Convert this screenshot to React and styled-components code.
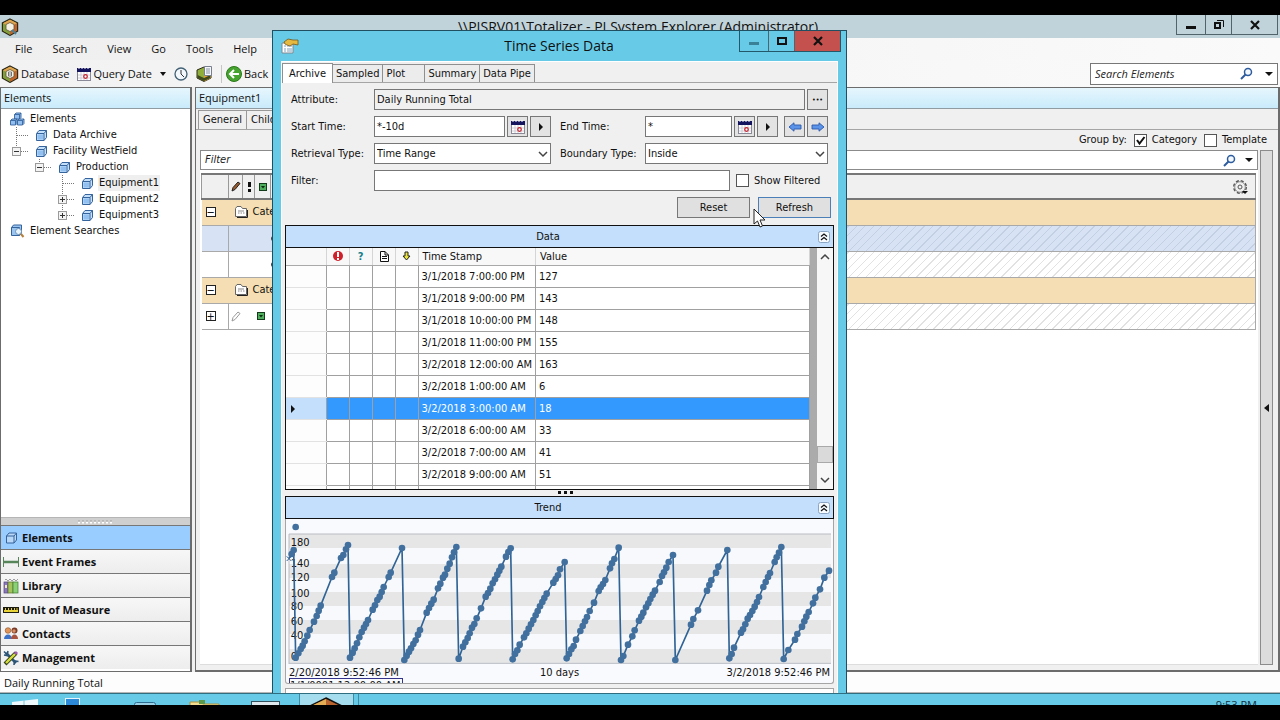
import React from "react";
import styled, { createGlobalStyle } from "styled-components";

const GlobalStyle = createGlobalStyle`
  * {
    box-sizing: border-box;
  }
  body {
    margin: 0;
    background-color: #000000;
    color: #111111;
    font-family: "DejaVu Sans Condensed", "DejaVu Sans", sans-serif;
    font-size: 11px;
    line-height: 16px;
  }
  button, input, select {
    margin: 0;
    padding: 0;
    border-radius: 0;
    color: inherit;
    font: inherit;
  }
  svg {
    display: block;
    flex: none;
  }
`;

const TREE = [
  { label: "Elements", depth: 0, icon: "group" },
  { label: "Data Archive", depth: 1 },
  { label: "Facility WestField", depth: 1, toggle: "-", last: true },
  { label: "Production", depth: 2, toggle: "-", last: true },
  { label: "Equipment1", depth: 3, selected: true },
  { label: "Equipment2", depth: 3, toggle: "+" },
  { label: "Equipment3", depth: 3, toggle: "+", last: true },
  { label: "Element Searches", depth: 0, icon: "search" },
];

const ROWS = [
  ["3/1/2018 7:00:00 PM", 127],
  ["3/1/2018 9:00:00 PM", 143],
  ["3/1/2018 10:00:00 PM", 148],
  ["3/1/2018 11:00:00 PM", 155],
  ["3/2/2018 12:00:00 AM", 163],
  ["3/2/2018 1:00:00 AM", 6],
  ["3/2/2018 3:00:00 AM", 18],
  ["3/2/2018 6:00:00 AM", 33],
  ["3/2/2018 7:00:00 AM", 41],
  ["3/2/2018 9:00:00 AM", 51],
];

// trend samples, in chart units
const FIRST_DAYS = [
  [27, 235], [35, 222], [41, 210],
  [47, 533], [55, 520], [62, 507], [68, 497], [74, 484], [82, 467], [89, 450], [102, 425], [110, 408], [116, 392], [122, 377], [156, 291], [163, 278], [183, 234], [190, 225], [198, 208], [204, 195],
  [210, 533], [218, 518], [224, 505], [231, 490], [238, 472], [245, 456], [252, 443], [258, 432], [264, 420], [278, 389], [285, 376], [292, 360], [299, 350], [305, 336], [311, 321], [326, 291], [332, 278], [366, 204],
  [373, 540], [380, 527], [387, 515], [393, 505], [400, 492], [407, 481], [414, 464], [420, 450], [440, 398], [447, 384], [454, 371], [461, 359], [474, 325], [481, 311], [489, 293], [495, 284], [502, 266], [509, 251], [516, 232], [522, 217], [529, 201],
  [536, 536], [549, 500], [556, 487], [563, 474], [569, 460], [576, 443], [583, 432], [590, 415], [603, 385], [617, 350], [624, 339], [631, 326], [638, 310], [645, 298], [652, 284], [658, 272], [664, 260], [678, 230], [685, 216], [692, 205],
  [698, 538], [705, 522], [712, 511], [719, 494], [732, 472], [739, 460], [746, 446], [753, 433], [760, 420], [767, 406], [773, 393], [780, 379], [787, 366], [793, 354], [800, 341], [820, 308], [827, 297], [834, 286], [840, 268], [854, 246],
];
const LAST_DAYS = [
  [20, 775], [27, 762], [34, 748], [41, 738], [48, 719], [61, 693], [68, 678], [75, 664], [81, 651], [89, 633], [102, 608], [116, 573], [122, 562], [129, 552], [136, 540], [150, 505], [156, 490], [163, 477], [176, 443],
  [183, 780], [190, 768], [204, 734], [217, 709], [224, 691], [237, 662], [244, 650], [250, 638], [258, 622], [265, 610], [271, 597], [278, 584], [285, 572], [299, 546], [306, 528], [312, 517], [319, 503], [326, 486], [339, 465],
  [346, 780], [393, 674], [400, 657], [414, 631], [441, 572], [448, 555], [454, 541], [468, 518], [475, 500], [502, 450],
  [508, 775], [515, 762], [522, 743], [543, 698], [549, 688], [556, 673], [563, 656], [570, 645], [577, 633], [584, 620], [591, 606], [597, 591], [610, 561], [617, 546], [624, 531], [630, 519], [644, 486], [650, 472], [657, 458], [664, 441],
  [671, 777], [685, 750], [705, 719], [712, 702], [726, 680], [733, 664], [739, 650], [746, 636], [759, 610], [766, 593], [780, 568], [793, 533], [807, 512],
];
const SAMPLES = [...FIRST_DAYS, ...LAST_DAYS.map(([x, y]) => [x + 840, y - 240])];
const AXIS = [[180, 197], [140, 262], [120, 303], [100, 350], [80, 391], [60, 434], [40, 478], [0, 541]];

function Logo({ search }) {
  return (
    <svg width="18" height="18" viewBox="0 0 18 18">
      <path d="M9 1 16.500 5v8L9 17.300 1.500 13V5z" fill="#d9a441" stroke="#2e2a18" strokeWidth="1.400" />
      <path d="M9 1.700 16 5.300 9 9 2 5.300z" fill="#dfa550" />
      <path d="M16 5.300v7.500l-7 4V9z" fill="#c2642c" />
      <path d="M2 5.300 9 9v7.800l-7-4z" fill="#7fa03c" />
      <path d="M9 4.500 13 6.500v5L9 13.500l-4-2v-5z" fill="#f5f1e4" stroke="#5f5636" strokeWidth=".8" />
      {search
        ? <path d="m11 12 4 4" stroke="#4f7f95" strokeWidth="2" />
        : <path d="M7.500 7h3v4h-3zM7.500 9h3" fill="#fff" stroke="#555" strokeWidth=".8" />}
    </svg>
  );
}

function Calendar() {
  return (
    <svg width="14" height="14" viewBox="0 0 14 14">
      <rect x=".5" y="1.500" width="13" height="12" fill="#fff" stroke="#8a8a98" />
      <path d="M0 1h14v4H0z" fill="#14145f" />
      <path d="M2 0v2M5 0v2M8 0v2M11 0v2" stroke="#fff" />
      <path d="M1 8h12M1 11h12M4 5v8M7 5v8M10 5v8" stroke="#c3c3cf" strokeWidth=".8" />
      <circle cx="8.500" cy="9.500" r="1.800" fill="none" stroke="#c8202a" strokeWidth="1.200" />
    </svg>
  );
}

function Cube() {
  return (
    <svg width="13" height="13" viewBox="0 0 13 13">
      <path d="M1.500 4.500 4 1.500h7.500v7L9 11.500H1.500z" fill="#c4e0fa" stroke="#35639c" strokeLinejoin="round" />
      <path d="M2 4.500h7v7M9 4.500l2.500-3" fill="none" stroke="#35639c" />
      <path d="M2.500 5.500H8v5H2.500z" fill="#92c0f0" />
    </svg>
  );
}

function CubeGroup() {
  return (
    <svg width="15" height="14" viewBox="0 0 15 14">
      <g fill="#92bff0" stroke="#35639c" strokeWidth=".9" strokeLinejoin="round">
        <path d="M4.500 2.500 6 1h5v4.500L9.500 7h-5z" />
        <path d="M.5 8.500 2 7h5v4.500L5.500 13h-5zM7.500 8.500 9 7h5v4.500L12.500 13h-5z" />
        <path d="M4.500 2.500h5V7M9.500 2.500 11 1M.5 8.500h5V13M5.500 8.500 7 7M7.500 8.500h5V13M12.500 8.500 14 7" fill="none" />
      </g>
    </svg>
  );
}

function CubeSearch() {
  return (
    <svg width="15" height="14" viewBox="0 0 15 14">
      <path d="M1.500 3.500 3.500 1h8v8l-2 2.500h-8z" fill="#9cc6f2" stroke="#35639c" />
      <path d="M1.500 3.500h8v8" fill="none" stroke="#35639c" />
      <circle cx="8.500" cy="7.500" r="3" fill="#e8f5ff" stroke="#6f93b5" />
      <path d="m11 10 2.500 3" stroke="#b5803a" strokeWidth="2" />
    </svg>
  );
}

function TreeToggle({ sign, last }) {
  return (
    <svg width="23" height="16" viewBox="0 0 23 16">
      <path d={last ? "M4.500 0v8" : "M4.500 0v16"} stroke="#777" strokeDasharray="1 1" />
      <path d="M5 8.500h12" stroke="#777" strokeDasharray="1 1" />
      {sign && <rect x=".5" y="4.500" width="8" height="8" fill="#f4f4f4" stroke="#9b9b9b" />}
      {sign && <path d={sign === "+" ? "M2 8.500h5M4.500 6v5" : "M2 8.500h5"} stroke="#333" />}
    </svg>
  );
}

function Magnifier() {
  return (
    <svg width="13" height="13" viewBox="0 0 13 13">
      <circle cx="8" cy="5" r="3.500" fill="#f4f9ff" stroke="#2d5c9e" strokeWidth="1.500" />
      <path d="M5.500 7.500 1 12" stroke="#2d5c9e" strokeWidth="2" />
    </svg>
  );
}

function Caret({ side }) {
  return (
    <svg width="8" height="8" viewBox="0 0 8 8">
      <path d={side ? "M2 0v8l4-4z" : "M0 2h8L4 6z"} fill="#111" />
    </svg>
  );
}

function SmallCaret() {
  return <svg width="6" height="4"><path d="M0 0h6L3 4z" fill="#111" /></svg>;
}

function Chevron({ up }) {
  return (
    <svg width="10" height="10" viewBox="0 0 10 10">
      <path d={up ? "m1 7 4-4 4 4" : "m1 3 4 4 4-4"} fill="none" stroke="#444" strokeWidth="1.500" />
    </svg>
  );
}

function BlueArrow({ left }) {
  return (
    <svg width="14" height="10" viewBox="0 0 14 10">
      <path
        d={left ? "M1 5 6 .8V3h7v4H6v2.200z" : "M13 5 8 .8V3H1v4h7v2.200z"}
        fill="#5b93e8"
        stroke="#2c59ab"
        strokeWidth=".9"
      />
    </svg>
  );
}

function Minimize({ color = "#111" }) {
  return <svg width="12" height="10"><path d="M1 6h10v3H1z" fill={color} /></svg>;
}

function Maximize() {
  return <svg width="12" height="10"><rect x="2" y="2" width="8" height="6" fill="none" stroke="#111" strokeWidth="2" /></svg>;
}

function Restore() {
  return (
    <svg width="12" height="11" viewBox="0 0 12 11">
      <path d="M2 4h5v5H2z" fill="none" stroke="#111" strokeWidth="2" />
      <path d="M4 1.500h6.500V8" fill="none" stroke="#111" />
    </svg>
  );
}

function Close() {
  return <svg width="10" height="10" viewBox="0 0 10 10"><path d="m1 1 8 8M9 1 1 9" stroke="#111" strokeWidth="2.200" /></svg>;
}

function DoubleUp() {
  return (
    <svg width="12" height="12" viewBox="0 0 12 12">
      <rect x=".5" y=".5" width="11" height="11" rx="2" fill="#f5faff" stroke="#8ba5c4" />
      <path d="m3 5.500 3-2.500 3 2.500M3 9l3-2.500L9 9" fill="none" stroke="#111" strokeWidth="1.200" />
    </svg>
  );
}

function GreenFlag() {
  return (
    <svg width="8" height="8" viewBox="0 0 8 8">
      <rect x=".5" y=".5" width="7" height="7" fill="#4fae5d" stroke="#123c19" />
      <path d="M2 3h4L4 5.500z" fill="#0b2a10" />
    </svg>
  );
}

function Pencil({ faint }) {
  return (
    <svg width="10" height="11" viewBox="0 0 10 11">
      <path d="M1 10 2 6.500 7 1l2 1.500-5 6z" fill={faint ? "#fff" : "#9b5a2c"} stroke={faint ? "#999" : "#222"} />
    </svg>
  );
}

function Folder() {
  return (
    <svg width="14" height="13" viewBox="0 0 14 13">
      <path d="M2 11.500h10.500V4" fill="none" stroke="#222" />
      <path d="M.5 2.500 2 .5h4L7.500 2.500h4v8H.5z" fill="#fff" stroke="#666" />
      <path d="M3 5h6M3 7h1.500M5.500 7H7M8 7h1.500" stroke="#888" />
    </svg>
  );
}

function Gear() {
  return (
    <svg width="16" height="16" viewBox="0 0 16 16">
      <circle cx="8" cy="8" r="6.300" fill="none" stroke="#555" strokeWidth="1.400" strokeDasharray="3 1.950" />
      <circle cx="8" cy="8" r="5.300" fill="#f0f0f0" stroke="#777" strokeWidth=".8" />
      <circle cx="8" cy="8" r="2" fill="none" stroke="#555" />
      <path d="M10 12h6l-3 3z" fill="#111" />
    </svg>
  );
}

function NavIcon({ name }) {
  return (
    <svg width="16" height="16" viewBox="0 0 16 16">
      {name === "Elements" && (
        <g fill="none" stroke="#35639c">
          <path d="M3.500 6 6 3h7.500v7L11 13H3.500z" fill="#b9d8f7" />
          <path d="M3.500 6H11v7M11 6l2.500-3" />
        </g>
      )}
      {name === "Event Frames" && (
        <g stroke="#56855a">
          <path d="M.5 3v10M15.500 3v10" />
          <path d="M1 8h14" strokeWidth="2.500" />
        </g>
      )}
      {name === "Library" && (
        <g strokeWidth=".7">
          <rect x="1" y="4" width="4" height="11" fill="#8a79bd" stroke="#54467f" />
          <rect x="5" y="4" width="5" height="11" fill="#a5c25c" stroke="#58702a" />
          <rect x="10" y="4" width="5" height="11" fill="#8bcf76" stroke="#3f7a31" />
          <path d="M2 2l1-1 2 2 2-2 2 2 2-2 2 2 2-2" fill="none" stroke="#777" />
          <path d="M2 7h2v3H2z" fill="#f0e8c0" />
        </g>
      )}
      {name === "Unit of Measure" && (
        <g>
          <path d="M0 5h16v6H0z" fill="#1c1c10" />
          <path d="M1 8h14v2H1z" fill="#e8d23a" />
          <path d="M2.500 6v3M5.500 6v3M8.500 6v3M11.500 6v3M14 6v3" stroke="#e8d23a" />
        </g>
      )}
      {name === "Contacts" && (
        <g>
          <circle cx="5" cy="4.500" r="2.800" fill="#e0955a" stroke="#8c4c24" strokeWidth=".6" />
          <path d="M1 13c0-6 8-6 8 0z" fill="#3d72c9" />
          <circle cx="11.500" cy="4.500" r="3" fill="#7b3a26" />
          <circle cx="11" cy="5" r="1.700" fill="#d99068" />
          <path d="M8 13c0-6 7-6 7 0z" fill="#a85240" />
        </g>
      )}
      {name === "Management" && (
        <g>
          <path d="m3 3 10 10" stroke="#2d5577" strokeWidth="2.600" />
          <path d="M1 1.500 4 4.500M1 5l3 .5L5 1M11 15l.5-4 4 .5" stroke="#2d5577" strokeWidth="1.600" fill="none" />
          <path d="M2 14 13 3" stroke="#33401a" strokeWidth="4" />
          <path d="M3 13 12 4" stroke="#d6de3c" strokeWidth="2.400" />
          <path d="m12 4 2-2" stroke="#a05ab0" strokeWidth="3" />
        </g>
      )}
    </svg>
  );
}

function TrendPlot() {
  return (
    <Plot viewBox="18 117 1641 438" preserveAspectRatio="none">
      <rect x="27" y="162" width="1626" height="387" fill="#f8f9fc" />
      {[162, 252, 336, 420, 507].map((y) => (
        <rect key={y} x="27" y={y} width="1626" height="42" fill="#e6e6e7" />
      ))}
      <path d="M27 552V162H1653M27 550H1653" fill="none" stroke="#b9bcc3" strokeWidth="3" />
      {AXIS.map(([label, y]) => (
        <text key={label} x="32" y={y} fontSize="33" fill="#111">{label}</text>
      ))}
      <polyline
        points={SAMPLES.map((p) => p.join(",")).join(" ")}
        fill="none"
        stroke="#316496"
        strokeWidth="5"
      />
      {SAMPLES.slice(1).map(([x, y]) => (
        <circle key={x} cx={x} cy={y} r="10" fill="#41709f" />
      ))}
      <path d="m20 229 14 14m0-14-14 14" stroke="#316496" strokeWidth="3" />
      <circle cx="47" cy="141" r="10" fill="#41709f" />
    </Plot>
  );
}

function DataTable() {
  return (
    <DataGrid>
      <colgroup>
        <col width="40" />
        <col width="23" />
        <col width="23" />
        <col width="23" />
        <col width="23" />
        <col width="117" />
        <col />
      </colgroup>
      <thead>
        <tr>
          <th aria-label="Row" />
          <th aria-label="Error">
            <svg width="10" height="10"><circle cx="5" cy="5" r="5" fill="#cf1f2b" /><path d="M4 1h2v5H4zM4 7h2v2H4z" fill="#fff" /></svg>
          </th>
          <th><Question>?</Question></th>
          <th aria-label="Annotation">
            <svg width="10" height="11"><path d="M1.500.5H6L9.500 4v6.500h-8zM3 5.500h5M3 7.500h5M6 .5V4h3.500" fill="#fff" stroke="#111" /></svg>
          </th>
          <th aria-label="Substituted">
            <svg width="9" height="10"><path d="M3 1h3v4h2L4.500 9 1 5h2z" fill="#e9e337" stroke="#222" /></svg>
          </th>
          <th>Time Stamp</th>
          <th>Value</th>
        </tr>
      </thead>
      <tbody>
        {ROWS.map(([time, value], i) => (
          <DataRow key={time} $selected={i === 6}>
            <td>{i === 6 && <Caret side />}</td>
            <td />
            <td />
            <td />
            <td />
            <td>{time}</td>
            <td>{value}</td>
          </DataRow>
        ))}
        <DataRow>
          <td /><td /><td /><td /><td /><td /><td />
        </DataRow>
      </tbody>
    </DataGrid>
  );
}

function TimeSeriesDialog() {
  return (
    <Dialog>
      <DialogTitle>
        <svg width="18" height="16" viewBox="0 0 18 16">
          <path d="M1 5h11v10H1z" fill="#fff" stroke="#7c8792" />
          <path d="M3 8h2M6 8h5M3 11h2M6 11h5M3 13h2M6 13h5" stroke="#7f9fbd" />
          <path d="m3 4 4-3 5 1h5v5l-5-1-3 2-3-1-2-1z" fill="#e5b93f" stroke="#75581c" strokeWidth=".8" />
        </svg>
        <DialogName>Time Series Data</DialogName>
        <WindowButtons $dialog>
          <WindowButton $w={28} aria-label="Minimize"><Minimize color="#3a8197" /></WindowButton>
          <WindowButton $w={26} aria-label="Maximize"><Maximize /></WindowButton>
          <WindowButton $w={46} $close aria-label="Close"><Close /></WindowButton>
        </WindowButtons>
      </DialogTitle>
      <Client>
        <DialogTabs>
          <DialogTab $active>Archive</DialogTab>
          <DialogTab>Sampled</DialogTab>
          <DialogTab $w={42}>Plot</DialogTab>
          <DialogTab>Summary</DialogTab>
          <DialogTab>Data Pipe</DialogTab>
        </DialogTabs>
        <Form>
          <label htmlFor="attribute">Attribute:</label>
          <FieldLine>
            <TextField id="attribute" $muted readOnly value="Daily Running Total" />
            <SmallButton>•••</SmallButton>
          </FieldLine>
          <label htmlFor="start">Start Time:</label>
          <FieldPair>
            <FieldLine>
              <TextField id="start" defaultValue="*-10d" />
              <SmallButton aria-label="Pick start"><Calendar /></SmallButton>
              <SmallButton aria-label="Start options"><Caret side /></SmallButton>
            </FieldLine>
            <label htmlFor="end">End Time:</label>
            <FieldLine>
              <TextField id="end" defaultValue="*" />
              <SmallButton aria-label="Pick end"><Calendar /></SmallButton>
              <SmallButton aria-label="End options"><Caret side /></SmallButton>
              <Steps>
                <SmallButton aria-label="Back"><BlueArrow left /></SmallButton>
                <SmallButton aria-label="Forward"><BlueArrow /></SmallButton>
              </Steps>
            </FieldLine>
          </FieldPair>
          <label htmlFor="retrieval">Retrieval Type:</label>
          <FieldPair>
            <SelectBox>
              <select id="retrieval"><option>Time Range</option></select>
              <Chevron />
            </SelectBox>
            <label htmlFor="boundary">Boundary Type:</label>
            <SelectBox>
              <select id="boundary"><option>Inside</option></select>
              <Chevron />
            </SelectBox>
          </FieldPair>
          <label htmlFor="filter">Filter:</label>
          <FieldLine>
            <TextField id="filter" />
            <FilteredLabel>
              <Tick type="checkbox" />
              Show Filtered
            </FilteredLabel>
          </FieldLine>
        </Form>
        <Actions>
          <ActionButton>Reset</ActionButton>
          <ActionButton $primary>Refresh</ActionButton>
        </Actions>
        <Group>
          <GroupTitle><span>Data</span><DoubleUp /></GroupTitle>
          <GridFrame>
            <DataTable />
            <ScrollBar>
              <Chevron up />
              <ScrollThumb />
              <Chevron />
            </ScrollBar>
          </GridFrame>
        </Group>
        <Splitter>
          <svg width="16" height="4"><path d="M1 0h3v3H1zM7 0h3v3H7zM13 0h3v3h-3z" fill="#111" /></svg>
        </Splitter>
        <Group>
          <GroupTitle><span>Trend</span><DoubleUp /></GroupTitle>
          <TrendFrame>
            <TrendPlot />
            <TrendRange>
              <span>2/20/2018 9:52:46 PM</span>
              <span>10 days</span>
              <span>3/2/2018 9:52:46 PM</span>
            </TrendRange>
            <TrendCursor>1/1/0001 12:00:00 AM</TrendCursor>
          </TrendFrame>
        </Group>
        <BottomBox />
      </Client>
    </Dialog>
  );
}

export default function App() {
  return (
    <Screen>
      <GlobalStyle />
      <Desktop>
        <TitleBar>
          <Logo search />
          <WindowName>\\PISRV01\Totalizer - PI System Explorer (Administrator)</WindowName>
          <WindowButtons>
            <WindowButton $w={28} aria-label="Minimize window"><Minimize /></WindowButton>
            <WindowButton $w={26} aria-label="Restore window"><Restore /></WindowButton>
            <WindowButton $w={46} aria-label="Close window"><Close /></WindowButton>
          </WindowButtons>
        </TitleBar>
        <MenuBar>
          {["File", "Search", "View", "Go", "Tools", "Help"].map((item) => (
            <MenuItem key={item}>{item}</MenuItem>
          ))}
        </MenuBar>
        <ToolBar>
          <ToolButton><Logo />Database</ToolButton>
          <ToolButton><Calendar />Query Date<CaretSlot><SmallCaret /></CaretSlot></ToolButton>
          <ToolButton aria-label="Time">
            <svg width="14" height="14"><circle cx="7" cy="7" r="6" fill="#f2f8fc" stroke="#426174" strokeWidth="1.300" /><path d="M7 3v4l3 3" fill="none" stroke="#333" /></svg>
          </ToolButton>
          <ToolButton aria-label="Check in">
            <svg width="17" height="16" viewBox="0 0 17 16">
              <path d="m1 4 7-3 7 3v8l-7 3.500L1 12z" fill="#8fae3c" stroke="#2e2a18" />
              <path d="m8 8 7-4v8l-7 3.500z" fill="#e0a03a" />
              <path d="m1.500 9 6.500 3 6.500-3v3L8 15 1.500 12z" fill="#3f4a1c" />
              <path d="M8.500.5h7v9h-7z" fill="#f5f7fb" stroke="#77808c" />
              <path d="M10 3h4M10 5h4M10 7h4" stroke="#8a94a3" />
            </svg>
          </ToolButton>
          <ToolDivider />
          <ToolButton>
            <svg width="16" height="16" viewBox="0 0 16 16"><circle cx="8" cy="8" r="7.500" fill="#46a32f" stroke="#2b7a1b" /><path d="M13 8H5M8 4 4 8l4 4" fill="none" stroke="#fff" strokeWidth="2" /></svg>
            Back
          </ToolButton>
          <SearchBox>
            <SearchInput aria-label="Search Elements" placeholder="Search Elements" />
            <Magnifier />
            <Caret />
          </SearchBox>
        </ToolBar>
        <Body>
          <Sidebar>
            <PanelTitle>Elements</PanelTitle>
            <Tree>
              {TREE.map((node) => (
                <TreeRow key={node.label} $depth={node.depth}>
                  {node.depth > 0 && <TreeToggle sign={node.toggle} last={node.last} />}
                  {node.icon === "group" ? <CubeGroup /> : node.icon === "search" ? <CubeSearch /> : <Cube />}
                  <TreeLabel $selected={node.selected}>{node.label}</TreeLabel>
                </TreeRow>
              ))}
            </Tree>
            <Grip>
              <svg width="36" height="4"><path d="M0 2h36" stroke="#fff" strokeWidth="3" strokeDasharray="2 2" /><path d="M0 1h36" stroke="#888" strokeDasharray="2 2" /></svg>
            </Grip>
            <Nav>
              {["Elements", "Event Frames", "Library", "Unit of Measure", "Contacts", "Management"].map((name, i) => (
                <NavButton key={name} $active={i === 0}>
                  <NavIcon name={name} />
                  {name}
                </NavButton>
              ))}
            </Nav>
          </Sidebar>
          <Viewer>
            <PanelTitle>Equipment1</PanelTitle>
            <ViewerTabs>
              <ViewerTab>General</ViewerTab>
              <ViewerTab>Child Elements</ViewerTab>
            </ViewerTabs>
            <GroupBy>
              Group by:
              <label><Tick type="checkbox" defaultChecked />Category</label>
              <label><Tick type="checkbox" />Template</label>
            </GroupBy>
            <ViewerBody>
              <Attributes>
                <FilterBox>
                  <SearchInput aria-label="Filter" placeholder="Filter" />
                  <Magnifier />
                  <Caret />
                </FilterBox>
                <AttributeTable>
                  <colgroup>
                    <col width="27" />
                    <col width="14" />
                    <col width="12" />
                    <col width="16" />
                    <col />
                  </colgroup>
                  <thead>
                    <tr>
                      <th aria-label="Expand" />
                      <th aria-label="Edited"><Pencil /></th>
                      <th aria-label="Alert"><svg width="4" height="10"><path d="M1 0h3v5H1zM1 7h3v3H1z" fill="#111" /></svg></th>
                      <th aria-label="State"><GreenFlag /></th>
                      <th aria-label="Settings"><Right><Gear /></Right></th>
                    </tr>
                  </thead>
                  <tbody>
                    <CategoryRow>
                      <td><Expander>−</Expander></td>
                      <td colSpan="4"><Category><Folder />Category</Category></td>
                    </CategoryRow>
                    <AttributeRow $selected>
                      <td />
                      <td colSpan="4"><Marker /></td>
                    </AttributeRow>
                    <AttributeRow>
                      <td />
                      <td colSpan="4"><Marker /></td>
                    </AttributeRow>
                    <CategoryRow>
                      <td><Expander>−</Expander></td>
                      <td colSpan="4"><Category><Folder />Category</Category></td>
                    </CategoryRow>
                    <AttributeRow>
                      <td><Expander>+</Expander></td>
                      <td colSpan="4"><Flags><Pencil faint /><GreenFlag /></Flags></td>
                    </AttributeRow>
                  </tbody>
                </AttributeTable>
              </Attributes>
              <Collapser aria-label="Show side panel">
                <svg width="6" height="8"><path d="M5 0v8L0 4z" fill="#111" /></svg>
              </Collapser>
            </ViewerBody>
          </Viewer>
        </Body>
        <StatusBar>Daily Running Total</StatusBar>
        <TaskBar>
          <Tasks>
            <svg width="360" height="30" viewBox="0 0 360 30">
              <path d="M12 8 38 5v20H12z" fill="#eef9fd" />
              <path d="M24 6v20" stroke="#7fc4da" />
              <rect x="65.500" y="4.500" width="14" height="20" fill="#2c8ad8" stroke="#e8f4fb" />
              <rect x="134.500" y="8.500" width="21" height="16" rx="2" fill="#9bd2e8" stroke="#2f6d90" />
              <path d="M190 8h10l3 2h16v14h-29z" fill="#f1dc8f" stroke="#ab8e3a" />
              <path d="M199 6h6v4h-6z" fill="#5a9a4a" />
              <rect x="251.500" y="7.500" width="28" height="18" fill="#dfe9ee" stroke="#35515e" />
              <rect x="299.500" y="-1" width="54" height="34" fill="#a5dcee" stroke="#3f8ba2" />
              <path d="M358.500 0v30" stroke="#3f8ba2" />
              <path d="m326 4 18 9v17h-36V13z" fill="#b9642f" stroke="#111" strokeWidth="1.500" />
              <path d="m326 5-17 8 17 9z" fill="#e2ad54" />
            </svg>
          </Tasks>
          <TaskClock>9:53 PM</TaskClock>
        </TaskBar>
        <TimeSeriesDialog />
        <Pointer width="13" height="20" viewBox="0 0 13 20">
          <path d="M1 1v15l3.500-3 2.500 6 2.500-1-2.500-6h5z" fill="#fff" stroke="#222" />
        </Pointer>
      </Desktop>
    </Screen>
  );
}

const Screen = styled.div`
  display: flex;
  flex-direction: column;
  height: 100vh;
  padding: 15px 0;
  overflow: hidden;
  background-color: #000000;
`;
const Desktop = styled.div`
  position: relative;
  display: flex;
  flex: 1;
  flex-direction: column;
  min-height: 0;
  overflow: hidden;
  background-color: #ffffff;
`;
const TitleBar = styled.header`
  display: flex;
  align-items: center;
  height: 23px;
  padding-left: 1px;
  background-color: #c0d3da;
  font-family: "Open Sans", sans-serif;
`;
const WindowName = styled.div`
  flex: 1;
  padding-left: 81px;
  font-size: 14px;
  line-height: 20px;
  text-align: center;
  white-space: nowrap;
`;
const WindowButtons = styled.div`
  display: flex;
  align-self: flex-start;
  height: ${(p) => (p.$dialog ? 21 : 20)}px;
  margin-right: ${(p) => (p.$dialog ? 5 : 2)}px;
  border: 1px solid ${(p) => (p.$dialog ? "#23586a" : "#51646c")};
  border-top: 0;
`;
const WindowButton = styled.button`
  display: flex;
  align-items: center;
  justify-content: center;
  width: ${(p) => p.$w}px;
  border: 0;
  border-left: 1px solid #51646c;
  background-color: ${(p) => (p.$close ? "#c4514d" : "transparent")};
  &:first-child {
    border-left: 0;
  }
`;
const MenuBar = styled.nav`
  display: flex;
  align-items: center;
  gap: 20px;
  height: 22px;
  padding-left: 15px;
  background: linear-gradient(90deg, #efefef, #fafafa);
  font-family: "Open Sans", sans-serif;
`;
const MenuItem = styled.button`
  border: 0;
  background: none;
`;
const ToolBar = styled.div`
  display: flex;
  align-items: center;
  gap: 8px;
  height: 27px;
  padding-left: 1px;
  background: linear-gradient(90deg, #f2f2f2, #fafafa);
  font-family: "Open Sans", sans-serif;
`;
const ToolButton = styled.button`
  display: flex;
  align-items: center;
  gap: 2px;
  border: 0;
  background: none;
  white-space: nowrap;
`;
const CaretSlot = styled.span`
  padding-left: 6px;
`;
const ToolDivider = styled.span`
  width: 1px;
  height: 18px;
  margin-right: -4px;
  background-color: #c6c6c6;
`;
const SearchBox = styled.div`
  display: flex;
  align-items: center;
  gap: 12px;
  width: 188px;
  height: 22px;
  margin-left: auto;
  margin-right: 2px;
  padding: 0 4px;
  border: 1px solid #777777;
  background-color: #ffffff;
`;
const SearchInput = styled.input`
  flex: 1;
  min-width: 0;
  border: 0;
  outline: 0;
  background: none;
  font-style: italic;
  &::placeholder {
    color: #222222;
    opacity: 1;
  }
`;
const Body = styled.div`
  display: flex;
  flex: 1;
  gap: 3px;
  min-height: 0;
  background-color: #f0f0f0;
`;
const Sidebar = styled.aside`
  display: flex;
  flex-direction: column;
  width: 192px;
  border: 1px solid #6c6c6c;
  border-right-width: 2px;
  background-color: #ffffff;
`;
const PanelTitle = styled.h2`
  height: 21px;
  margin: 0;
  padding: 2px 3px;
  border-bottom: 1px solid #8f9aa1;
  background: linear-gradient(#e6f6fd, #c9ebfb);
  font-family: "Open Sans", sans-serif;
  font-size: 11px;
  font-weight: 400;
  line-height: 16px;
`;
const Tree = styled.div`
  flex: 1;
  padding-top: 2px;
`;
const TreeRow = styled.div`
  display: flex;
  align-items: center;
  height: 16px;
  padding-left: ${(p) => (p.$depth ? p.$depth * 23 - 12 : 9)}px;
`;
const TreeLabel = styled.span`
  margin-left: 4px;
  padding: 0 1px;
  background-color: ${(p) => (p.$selected ? "#efefef" : "transparent")};
  white-space: nowrap;
`;
const Grip = styled.div`
  display: flex;
  align-items: center;
  justify-content: center;
  height: 8px;
  border-top: 1px solid #b5b5b5;
  background-color: #cfcfcf;
`;
const Nav = styled.nav`
  display: flex;
  flex-direction: column;
  padding-bottom: 2px;
`;
const NavButton = styled.button`
  display: flex;
  align-items: center;
  gap: 3px;
  height: 24px;
  padding-left: 2px;
  border: 0;
  border-top: 1px solid #777777;
  background: ${(p) => (p.$active ? "#99ccff" : "linear-gradient(#f7f7f7, #ededed)")};
  font-family: "Open Sans", sans-serif;
  font-weight: 700;
`;
const Viewer = styled.main`
  display: flex;
  flex: 1;
  flex-direction: column;
  min-width: 0;
  border: 2px solid #6c6c6c;
  border-top-width: 1px;
  border-left-width: 1px;
  background-color: #f0f0f0;
`;
const ViewerTabs = styled.div`
  display: flex;
  align-items: flex-end;
  height: 21px;
  padding-left: 2px;
  border-bottom: 1px solid #a5a5a5;
`;
const ViewerTab = styled.button`
  height: 19px;
  padding: 0 4px;
  border: 1px solid #999999;
  border-bottom: 0;
  background-color: #efefef;
  & + & {
    border-left: 0;
  }
`;
const GroupBy = styled.div`
  display: flex;
  align-items: center;
  justify-content: flex-end;
  gap: 7px;
  height: 20px;
  padding-right: 11px;
  label {
    display: flex;
    align-items: center;
    gap: 5px;
  }
`;
const Tick = styled.input`
  appearance: none;
  flex: none;
  width: 13px;
  height: 13px;
  border: 1px solid #555555;
  background-color: #ffffff;
  &:checked {
    background-image: url("data:image/svg+xml,%3Csvg xmlns='http://www.w3.org/2000/svg' viewBox='0 0 11 11'%3E%3Cpath d='m2 5 2.500 3.500L9.500 2' fill='none' stroke='%23111' stroke-width='2'/%3E%3C/svg%3E");
  }
`;
const ViewerBody = styled.div`
  display: flex;
  flex: 1;
  gap: 2px;
  min-height: 0;
  padding: 0 5px 5px 4px;
`;
const Attributes = styled.section`
  flex: 1;
  min-width: 0;
  border-bottom: 1px solid #dddddd;
  background-color: #ffffff;
`;
const FilterBox = styled.div`
  display: flex;
  align-items: center;
  gap: 9px;
  height: 20px;
  padding: 0 4px;
  border: 1px solid #8b8b8b;
`;
const AttributeTable = styled.table`
  width: calc(100% - 3px);
  margin: 3px 2px 0 1px;
  border-collapse: collapse;
  table-layout: fixed;
  th {
    height: 25px;
    padding: 0;
    border: 1px solid #999999;
    border-top: 2px solid #777777;
    border-bottom: 2px solid #777777;
    background-color: #f0f0f0;
  }
  th svg {
    margin: 0 auto;
  }
  td {
    height: 26px;
    padding: 0;
    border-bottom: 1px solid #a9a9a9;
  }
  td:last-child {
    border-right: 1px solid #a9a9a9;
  }
`;
const Right = styled.div`
  display: flex;
  justify-content: flex-end;
  padding-right: 7px;
  th & svg {
    margin: 0;
  }
`;
const CategoryRow = styled.tr`
  background-color: #f5deb3;
`;
const AttributeRow = styled.tr`
  background-color: ${(p) => (p.$selected ? "#d7e3f4" : "#ffffff")};
  td:last-child {
    border-left: 1px solid #a9a9a9;
    background-image: repeating-linear-gradient(
      135deg,
      transparent 0,
      transparent 5px,
      ${(p) => (p.$selected ? "#c3cfe2" : "#e2e2e2")} 5px,
      ${(p) => (p.$selected ? "#c3cfe2" : "#e2e2e2")} 6px
    );
    background-position: 60px 0;
    background-repeat: no-repeat;
  }
`;
const Expander = styled.button`
  display: block;
  width: 10px;
  height: 10px;
  margin-left: 4px;
  border: 1px solid #222222;
  background-color: #ffffff;
  line-height: 7px;
`;
const Category = styled.div`
  display: flex;
  align-items: center;
  gap: 4px;
  padding-left: 6px;
`;
const Marker = styled.span`
  display: block;
  width: 5px;
  height: 5px;
  margin-left: 42px;
  border-radius: 3px;
  background-color: #444444;
`;
const Flags = styled.div`
  display: flex;
  align-items: center;
  gap: 16px;
  padding-left: 2px;
`;
const Collapser = styled.button`
  display: flex;
  align-items: center;
  justify-content: center;
  width: 13px;
  border: 1px solid #8b8b8b;
  background-color: #dcdcdc;
`;
const StatusBar = styled.footer`
  height: 21px;
  padding: 3px 4px 0;
  border-bottom: 1px solid #b5b5b5;
  background-color: #fdfdfd;
  font-family: "Open Sans", sans-serif;
`;
const TaskBar = styled.div`
  display: flex;
  justify-content: space-between;
  height: 12px;
  overflow: hidden;
  border-top: 1px solid #2f6d80;
  background-color: #67cbe8;
`;
const Tasks = styled.div`
  display: flex;
`;
const TaskClock = styled.time`
  padding: 3px 23px 0 0;
  color: #10303c;
  font-family: "Open Sans", sans-serif;
  font-size: 11px;
`;
const Dialog = styled.section`
  position: absolute;
  top: 15px;
  bottom: 12px;
  left: 272px;
  display: flex;
  flex-direction: column;
  width: 575px;
  overflow: hidden;
  padding: 0 8px;
  border: 1px solid #1f4f60;
  border-bottom: 0;
  background-color: #67cbe8;
`;
const DialogTitle = styled.header`
  display: flex;
  flex: none;
  align-items: center;
  height: 30px;
  margin-right: -8px;
`;
const DialogName = styled.h1`
  flex: 1;
  margin: 0;
  padding-left: 80px;
  font-family: "Open Sans", sans-serif;
  font-size: 14px;
  font-weight: 400;
  line-height: 20px;
  text-align: center;
`;
const Client = styled.div`
  flex: 1;
  min-height: 0;
  overflow: hidden;
  border: 1px solid #ffffff;
  border-bottom: 0;
  background-color: #f0f0f0;
`;
const DialogTabs = styled.div`
  display: flex;
  align-items: flex-end;
  height: 21px;
  border-bottom: 1px solid #a5a5a5;
`;
const DialogTab = styled.button`
  width: ${(p) => (p.$w ? `${p.$w}px` : "auto")};
  height: ${(p) => (p.$active ? 20 : 18)}px;
  margin-bottom: ${(p) => (p.$active ? -1 : 0)}px;
  padding: 0 ${(p) => (p.$active ? 6 : 3)}px;
  border: 1px solid #8f8f8f;
  border-bottom: 0;
  background-color: ${(p) => (p.$active ? "#ffffff" : "#ececec")};
  text-align: left;
  & + & {
    border-left: 0;
  }
`;
const Form = styled.div`
  display: grid;
  grid-template-columns: 83px 1fr;
  row-gap: 6px;
  align-items: center;
  padding: 6px 9px 0 9px;
`;
const FieldLine = styled.div`
  display: flex;
  align-items: center;
  gap: 2px;
  min-width: 0;
`;
const FieldPair = styled.div`
  display: grid;
  grid-template-columns: 177px 94px 1fr;
  align-items: center;
  label {
    padding-left: 9px;
    white-space: nowrap;
  }
`;
const TextField = styled.input`
  flex: 1;
  min-width: 0;
  height: 21px;
  padding: 0 2px;
  border: 1px solid #777777;
  background-color: ${(p) => (p.$muted ? "#f0f0f0" : "#ffffff")};
`;
const SmallButton = styled.button`
  display: flex;
  flex: none;
  align-items: center;
  justify-content: center;
  width: 21px;
  height: 21px;
  border: 1px solid #777777;
  background-color: #e3e3e3;
  font-size: 7px;
`;
const Steps = styled.div`
  display: flex;
  gap: 2px;
  padding-left: 4px;
`;
const SelectBox = styled.div`
  display: grid;
  align-items: center;
  select {
    grid-area: 1 / 1;
    height: 21px;
    padding: 0 2px;
    appearance: none;
    border: 1px solid #777777;
    background-color: #ffffff;
  }
  svg {
    grid-area: 1 / 1;
    justify-self: end;
    margin-right: 3px;
    pointer-events: none;
  }
`;
const FilteredLabel = styled.label`
  display: flex;
  align-items: center;
  gap: 5px;
  width: 96px;
  padding-left: 4px;
  white-space: nowrap;
`;
const Actions = styled.div`
  display: flex;
  justify-content: flex-end;
  gap: 8px;
  padding: 6px 6px 7px;
`;
const ActionButton = styled.button`
  width: 73px;
  height: 21px;
  border: 1px solid ${(p) => (p.$primary ? "#4a7fb8" : "#777777")};
  background-color: #e0e0e0;
`;
const Group = styled.section`
  margin: 0 3px;
`;
const GroupTitle = styled.h2`
  display: flex;
  align-items: center;
  height: 23px;
  margin: 0;
  padding: 0 3px 0 0;
  border: 1px solid #111111;
  background-color: #c4dffb;
  font-size: 11px;
  font-weight: 400;
  span {
    flex: 1;
    padding-right: 8px;
    text-align: center;
  }
`;
const GridFrame = styled.div`
  display: flex;
  height: 242px;
  overflow: hidden;
  border: 1px solid #111111;
  border-top: 0;
  background-color: #ababab;
`;
const DataGrid = styled.table`
  flex: 1;
  align-self: flex-start;
  border-collapse: collapse;
  table-layout: fixed;
  background-color: #ffffff;
  th {
    height: 17px;
    padding: 0 4px;
    border-right: 1px solid #d5d5d5;
    border-bottom: 1px solid #a9a9a9;
    background-color: #f8f8f8;
    font-weight: 400;
    line-height: 15px;
    text-align: left;
    white-space: nowrap;
  }
  th svg {
    margin: 0 auto;
  }
`;
const Question = styled.span`
  display: block;
  color: #167f8c;
  font-weight: 700;
  text-align: center;
`;
const DataRow = styled.tr`
  background-color: ${(p) => (p.$selected ? "#3399ff" : "#ffffff")};
  color: ${(p) => (p.$selected ? "#ffffff" : "inherit")};
  td {
    height: 22px;
    padding: 1px 3px 0;
    border-right: 1px solid #a0a0a0;
    border-bottom: 1px solid #a0a0a0;
    white-space: nowrap;
  }
  td:first-child {
    border-bottom-color: #e2e2e2;
    background-color: ${(p) => (p.$selected ? "#c4dffb" : "#fdfdfd")};
  }
`;
const ScrollBar = styled.div`
  display: flex;
  flex-direction: column;
  align-items: center;
  width: 16px;
  margin-left: 7px;
  padding: 4px 0;
  background-color: #f7f7f7;
`;
const ScrollThumb = styled.div`
  width: 16px;
  height: 17px;
  margin: auto 0 12px;
  border: 1px solid #a9a9a9;
  background-color: #dadada;
`;
const Splitter = styled.div`
  display: flex;
  align-items: center;
  justify-content: center;
  height: 6px;
  padding-left: 10px;
`;
const TrendFrame = styled.div`
  height: 165px;
  overflow: hidden;
  border: 1px solid #a5a5a5;
  border-top: 0;
  border-radius: 0 0 3px 3px;
  background-color: #f9fafd;
`;
const Plot = styled.svg`
  width: 100%;
  height: 146px;
`;
const TrendRange = styled.div`
  display: grid;
  grid-template-columns: 1fr auto 1fr;
  height: 13px;
  padding: 0 3px;
  line-height: 16px;
  span:last-child {
    text-align: right;
  }
`;
const TrendCursor = styled.div`
  width: 114px;
  height: 16px;
  margin-left: 3px;
  border: 1px solid #33338a;
  line-height: 14px;
`;
const BottomBox = styled.div`
  height: 20px;
  margin: 4px 3px 0;
  border: 1px solid #a5a5a5;
  background-color: #ffffff;
`;
const Pointer = styled.svg`
  position: absolute;
  top: 193px;
  left: 753px;
`;
